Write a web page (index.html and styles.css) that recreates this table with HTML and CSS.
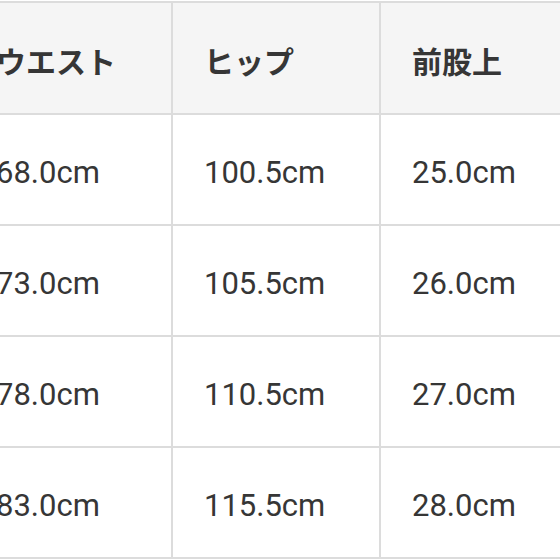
FILE: index.html
```html
<!DOCTYPE html>
<html lang="ja">
<head>
<meta charset="utf-8">
<link rel="stylesheet" href="styles.css">
</head>
<body>
<table class="size-table">
  <thead>
    <tr><th>ウエスト</th><th>ヒップ</th><th>前股上</th></tr>
  </thead>
  <tbody>
    <tr><td>68.0cm</td><td>100.5cm</td><td>25.0cm</td></tr>
    <tr><td>73.0cm</td><td>105.5cm</td><td>26.0cm</td></tr>
    <tr><td>78.0cm</td><td>110.5cm</td><td>27.0cm</td></tr>
    <tr><td>83.0cm</td><td>115.5cm</td><td>28.0cm</td></tr>
  </tbody>
</table>
</body>
</html>
```
FILE: styles.css
```css
html, body {
  margin: 0;
  padding: 0;
  background: #ffffff;
  overflow: hidden;
}
.size-table {
  border-collapse: collapse;
  margin: 1px 0 0 -37px;
  table-layout: fixed;
  width: 626px;
}
.size-table th,
.size-table td {
  border: 2px solid #dcdcdc;
  width: 207px;
  height: 111px;
  padding: 0 0 0 31px;
  box-sizing: border-box;
  text-align: left;
  vertical-align: middle;
  color: #363636;
}
.size-table th {
  background: #f5f5f5;
  font-family: "Noto Sans CJK JP", "Noto Sans", sans-serif;
  font-weight: 700;
  font-size: 30px;
  height: 112px;
  padding-top: 4px;
}
.size-table td {
  font-family: Roboto, "Liberation Sans", sans-serif;
  font-size: 31px;
  font-weight: 400;
  padding-top: 6px;
}
```
